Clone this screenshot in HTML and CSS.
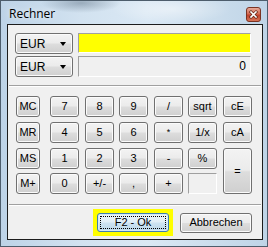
FILE: index.html
```html
<!DOCTYPE html>
<html>
<head>
<meta charset="utf-8">
<link rel="stylesheet" href="styles.css">
</head>
<body>
<div class="window">
  <div class="titlebar">
    <span class="title">Rechner</span>
    <span class="close">
      <svg width="15" height="15" viewBox="0 0 15 15">
        <defs>
          <linearGradient id="cg" x1="0" y1="0" x2="0" y2="1">
            <stop offset="0" stop-color="#e8b0a0"/>
            <stop offset="0.45" stop-color="#d46a52"/>
            <stop offset="0.55" stop-color="#c0412a"/>
            <stop offset="1" stop-color="#d8785a"/>
          </linearGradient>
        </defs>
        <rect x="0.5" y="0.5" width="14" height="14" rx="2.5" fill="url(#cg)" stroke="#7a3424"/>
        <path d="M5 5 L10 10 M10 5 L5 10" stroke="#5a2216" stroke-width="3" stroke-linecap="square"/>
        <path d="M5 5 L10 10 M10 5 L5 10" stroke="#ffffff" stroke-width="1.6" stroke-linecap="square"/>
      </svg>
    </span>
  </div>
  <div class="client">
    <div class="top">
      <div class="combo"><span>EUR</span><i class="arrow"></i></div>
      <div class="field yellow"></div>
      <div class="combo"><span>EUR</span><i class="arrow"></i></div>
      <div class="field value">0</div>
    </div>
    <div class="sep sep-top"></div>
    <div class="keys">
      <button class="btn">MC</button>
      <button class="btn">7</button>
      <button class="btn">8</button>
      <button class="btn">9</button>
      <button class="btn">/</button>
      <button class="btn">sqrt</button>
      <button class="btn">cE</button>

      <button class="btn">MR</button>
      <button class="btn">4</button>
      <button class="btn">5</button>
      <button class="btn">6</button>
      <button class="btn small">*</button>
      <button class="btn">1/x</button>
      <button class="btn">cA</button>

      <button class="btn">MS</button>
      <button class="btn">1</button>
      <button class="btn">2</button>
      <button class="btn">3</button>
      <button class="btn">-</button>
      <button class="btn">%</button>
      <button class="btn equals">=</button>

      <button class="btn">M+</button>
      <button class="btn">0</button>
      <button class="btn">+/-</button>
      <button class="btn">,</button>
      <button class="btn">+</button>
      <div class="memo"></div>
    </div>
    <div class="sep sep-bottom"></div>
    <div class="actions">
      <div class="focusbox"><button class="btn ok"><span>F2 - Ok</span></button></div>
      <button class="btn cancel">Abbrechen</button>
    </div>
  </div>
</div>
</body>
</html>
```
FILE: styles.css
```css
html, body {
  margin: 0;
  padding: 0;
}
body {
  width: 268px;
  height: 247px;
  overflow: hidden;
  background: #6b7b88;
}
.window {
  box-sizing: border-box;
  width: 268px;
  height: 247px;
  border: 1px solid #4d5d6c;
  display: flex;
  flex-direction: column;
  background:
    radial-gradient(ellipse 40px 10px at 80px 2px, rgba(70, 90, 110, 0.4), rgba(70, 90, 110, 0) 100%),
    radial-gradient(ellipse 60px 14px at 170px 8px, rgba(255, 255, 255, 0.45), rgba(255, 255, 255, 0) 100%),
    linear-gradient(90deg, #bdd3e7 0%, #d2e2f0 30%, #dae8f4 55%, #cbddec 80%, #bfd4e7 100%);
}
.titlebar {
  height: 23px;
  flex: none;
  display: flex;
  padding: 0 6px 0 8px;
}
.title {
  font-family: "Open Sans", "Noto Sans", sans-serif;
  font-size: 12px;
  color: #000;
  line-height: 14px;
  padding-top: 6px;
  text-shadow: 0 0 6px rgba(255, 255, 255, 0.9);
}
.close {
  margin-left: auto;
  margin-top: 6px;
  width: 15px;
  height: 15px;
  display: block;
}
.close svg {
  display: block;
}
.client {
  box-sizing: border-box;
  margin: 0 4px 0 6px;
  height: 216px;
  border: 1px solid #1c1c1c;
  background: #f0f0f0;
  display: flex;
  flex-direction: column;
}
.top {
  display: grid;
  grid-template-columns: 58px 173px;
  grid-template-rows: 21px 21px;
  column-gap: 5px;
  row-gap: 2px;
  padding: 8px 11px 0 7px;
}
.combo {
  box-sizing: border-box;
  border: 1px solid #707070;
  border-radius: 3px;
  background: linear-gradient(#f3f3f3 0%, #ebebeb 48%, #dddddd 52%, #cfcfcf 100%);
  box-shadow: inset 0 0 0 1px #fbfbfb;
  display: flex;
  align-items: center;
  padding: 0 5px 0 4px;
  font-family: "Liberation Sans", Arial, sans-serif;
  font-size: 12px;
  color: #000;
}
.arrow {
  margin-left: auto;
  width: 0;
  height: 0;
  border-left: 3.5px solid transparent;
  border-right: 3.5px solid transparent;
  border-top: 4px solid #000;
  margin-right: 1px;
}
.field {
  box-sizing: border-box;
  border-top: 1px solid #a0a0a0;
  border-left: 1px solid #a0a0a0;
  border-right: 1px solid #ffffff;
  border-bottom: 1px solid #ffffff;
}
.yellow {
  background: #ffff00;
  height: 20px;
}
.value {
  background: #f0f0f0;
  text-align: right;
  padding-right: 4px;
  font-family: "Liberation Sans", Arial, sans-serif;
  font-size: 12px;
  line-height: 19px;
  color: #000;
}
.sep {
  margin: 0 1px;
  border-top: 1px solid #a0a0a0;
  border-bottom: 1px solid #ffffff;
}
.sep-top {
  margin-top: 8px;
}
.keys {
  margin-top: 9px;
  padding-left: 8px;
  display: grid;
  grid-template-columns: 34px 35px 34px 35px 34px 35px 29px;
  grid-template-rows: 26px 26px 25px 21px;
  justify-items: start;
  align-items: start;
}
.btn {
  box-sizing: border-box;
  width: 29px;
  height: 21px;
  margin: 0;
  padding: 0;
  border: 1px solid #707070;
  border-radius: 3px;
  background: linear-gradient(#f3f3f3 0%, #ebebeb 48%, #dddddd 52%, #cfcfcf 100%);
  box-shadow: inset 0 0 0 1px #fbfbfb;
  font-family: "Liberation Sans", Arial, sans-serif;
  font-size: 11px;
  color: #000;
  line-height: 17px;
  text-align: center;
}
.keys .btn:nth-child(7n+1) {
  width: 24px;
}
.small {
  font-size: 9px;
}
.equals {
  grid-column: 7;
  grid-row: 3 / span 2;
  height: 46px;
}
.memo {
  box-sizing: border-box;
  width: 29px;
  height: 21px;
  border-top: 1px solid #a0a0a0;
  border-left: 1px solid #a0a0a0;
  border-right: 1px solid #ffffff;
  border-bottom: 1px solid #ffffff;
  background: #f0f0f0;
}
.sep-bottom {
  margin-top: 10px;
}
.actions {
  display: flex;
  justify-content: flex-end;
  align-items: center;
  gap: 7px;
  padding-right: 10px;
  margin-top: 3px;
}
.focusbox {
  background: #ffff00;
  padding: 4px;
  display: flex;
}
.ok {
  width: 72px;
  height: 19px;
  border-color: #3c7fb1;
  background: linear-gradient(#edf5fa 0%, #e0eef7 48%, #cde3f1 52%, #bcd8ea 100%);
  box-shadow: inset 0 0 0 1px #d6eaf6;
  display: flex;
  align-items: center;
  justify-content: center;
  padding: 2px;
}
.ok span {
  box-sizing: border-box;
  width: 100%;
  height: 100%;
  border: 1px dotted #000;
  line-height: 11px;
}
.cancel {
  width: 72px;
  height: 20px;
}
```
